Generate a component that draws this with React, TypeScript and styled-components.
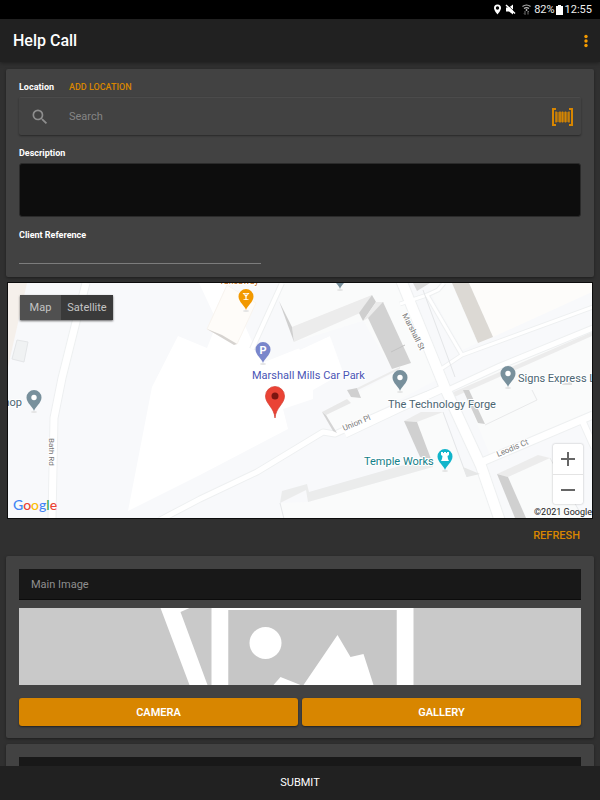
import React from "react";
import styled, { createGlobalStyle } from "styled-components";

const orange = "#d88600";

const GlobalStyle = createGlobalStyle`
  *, *::before, *::after { box-sizing: border-box; }
  body { margin: 0; background: #303030; }
  button, input, textarea { font: inherit; color: inherit; }
`;

const Screen = styled.div`
  display: flex;
  flex-direction: column;
  height: 100vh;
  background: #303030;
  color: #fff;
  font-family: Roboto, "Liberation Sans", sans-serif;
`;

const StatusBar = styled.div`
  flex: none;
  display: flex;
  align-items: center;
  justify-content: flex-end;
  height: 19px;
  padding: 0 8px;
  background: #000;
  color: #eee;
  font-size: 11px;
  line-height: 19px;
  svg { display: block; }
`;

const StatusIcon = styled.svg<{ $gap: number }>`
  width: 11px;
  height: 11px;
  margin-right: ${(p) => p.$gap}px;
`;

const Battery = styled.svg`
  width: 7px;
  height: 10px;
  margin: 0 2px 0 1px;
`;

const AppBar = styled.header`
  flex: none;
  z-index: 1;
  display: flex;
  align-items: center;
  justify-content: space-between;
  height: 43px;
  padding: 0 8px 0 13px;
  background: #212121;
  box-shadow: 0 1px 4px rgba(0, 0, 0, 0.4);
`;

const Title = styled.h1`
  margin: 0;
  font-size: 16px;
  font-weight: 500;
  line-height: 20px;
`;

const IconButton = styled.button`
  display: flex;
  padding: 0;
  border: 0;
  background: none;
  cursor: pointer;
`;

const Content = styled.main`
  flex: 1;
  min-height: 0;
  overflow: hidden;
  padding-top: 7px;
`;

const Card = styled.section`
  margin: 0 6px;
  padding: 8px 13px 13px;
  border-radius: 2px;
  background: #424242;
  box-shadow: 0 1px 3px rgba(0, 0, 0, 0.4);
`;

const ImageCard = styled(Card)`
  margin-bottom: 6px;
  padding: 13px 13px 12px;
`;

const LocationRow = styled.div`
  display: flex;
  align-items: center;
  gap: 15px;
  height: 20px;
`;

const Label = styled.label`
  display: block;
  font-size: 9px;
  font-weight: 700;
  line-height: 12px;
`;

const BlockLabel = styled(Label)`
  margin: 12px 0 4px;
`;

const TextButton = styled.button<{ $size: number }>`
  padding: 0;
  border: 0;
  background: none;
  color: ${orange};
  font-size: ${(p) => p.$size}px;
  font-weight: 500;
  line-height: 16px;
  cursor: pointer;
`;

const SearchBox = styled.div`
  display: flex;
  align-items: center;
  height: 38px;
  padding: 0 8px 0 11px;
  border-top: 1px solid #4b4b4b;
  border-radius: 2px;
  box-shadow: 0 1px 2px rgba(0, 0, 0, 0.4);
`;

const SearchInput = styled.input`
  flex: 1;
  min-width: 0;
  margin-left: 19px;
  padding: 0;
  border: 0;
  outline: 0;
  background: none;
  font-size: 11px;
  &::placeholder { color: #858585; opacity: 1; }
`;

const Description = styled.textarea`
  display: block;
  width: 100%;
  height: 54px;
  padding: 6px;
  border: 1px solid #2a2a2a;
  border-radius: 3px;
  background: #0d0d0d;
  resize: none;
  font-size: 11px;
`;

const ReferenceInput = styled.input`
  display: block;
  width: 43%;
  height: 19px;
  padding: 0;
  border: 0;
  border-bottom: 1px solid #7d7d7d;
  outline: 0;
  background: none;
  font-size: 11px;
`;

const MapFrame = styled.section`
  position: relative;
  height: 237px;
  margin: 5px 7px 0;
  overflow: hidden;
  border: 1px solid #0c0c0c;
  background: #f8f9fb;
`;

const MapDrawing = styled.svg`
  display: block;
  width: 100%;
  height: 100%;
  font-family: Roboto, "Liberation Sans", sans-serif;
`;

const MapTypes = styled.div`
  position: absolute;
  top: 12px;
  left: 12px;
  display: flex;
  box-shadow: 0 1px 2px rgba(0, 0, 0, 0.6);
`;

const MapType = styled.button<{ $active?: boolean }>`
  width: ${(p) => (p.$active ? 41 : 52)}px;
  height: 25px;
  padding: 0;
  border: 0;
  background: ${(p) => (p.$active ? "#505050" : "#3a3a3a")};
  color: #c4c4c4;
  font-size: 11px;
`;

const ZoomControls = styled.div`
  position: absolute;
  right: 9px;
  bottom: 14px;
  display: flex;
  flex-direction: column;
  width: 30px;
  border-radius: 2px;
  background: #fff;
  box-shadow: 0 0 2px rgba(0, 0, 0, 0.3);
`;

const ZoomButton = styled.button`
  display: flex;
  align-items: center;
  justify-content: center;
  height: 30px;
  padding: 0;
  border: 0;
  background: none;
  & + & { border-top: 1px solid #e4e4e4; }
`;

const GoogleLogo = styled.a`
  position: absolute;
  left: 5px;
  bottom: 3px;
  color: #4285f4;
  font-family: Lato, sans-serif;
  font-size: 14px;
  font-weight: 500;
  line-height: 20px;
  text-decoration: none;
`;

const Letter = styled.span<{ $color: string }>`
  color: ${(p) => p.$color};
`;

const Copyright = styled.small`
  position: absolute;
  right: 0;
  bottom: 0;
  color: #222;
  font-size: 9px;
  line-height: 12px;
`;

const RefreshRow = styled.div`
  display: flex;
  align-items: flex-start;
  justify-content: flex-end;
  height: 37px;
  padding: 9px 20px 0;
`;

const NameInput = styled.input`
  display: block;
  width: 100%;
  height: 31px;
  padding: 0 12px;
  border: 0;
  border-bottom: 1px solid #0c0c0c;
  border-radius: 0;
  background: #181818;
  font-size: 11px;
  &::placeholder { color: #8f8f8f; opacity: 1; }
`;

const Preview = styled.svg`
  display: block;
  width: 100%;
  height: 77px;
  margin: 8px 0 13px;
`;

const ButtonRow = styled.div`
  display: grid;
  grid-template-columns: 1fr 1fr;
  gap: 4px;
`;

const FilledButton = styled.button`
  height: 28px;
  border: 0;
  border-radius: 3px;
  background: ${orange};
  color: #fff;
  font-size: 11px;
  font-weight: 600;
  box-shadow: 0 1px 2px rgba(0, 0, 0, 0.5);
  cursor: pointer;
`;

const SubmitButton = styled.button`
  flex: none;
  z-index: 1;
  height: 34px;
  padding: 0 0 2px;
  border: 0;
  background: #212121;
  color: #fff;
  font-size: 11px;
  cursor: pointer;
`;

const MapPin = ({ x, y, color, children }: { x: number; y: number; color: string; children?: React.ReactNode }) => (
  <g transform={`translate(${x} ${y})`}>
    <ellipse cx="0" cy="1" rx="3" ry="1" fill="#e4e4e4" />
    <path d="M0 0C-1 -4 -7.500 -8 -7.500 -13.500A7.500 7.500 0 0 1 7.500 -13.500C7.500 -8 1 -4 0 0Z" fill={color} />
    {children ?? <circle cx="0" cy="-13.500" r="2.700" fill="#fff" />}
  </g>
);

const roads = [
  { d: "M86 283L76 322L62 378L54 418L52 519", w: 7 },
  { d: "M160 520L200 499L257 472L323 432L335 434L400 405L448 386", w: 5 },
  { d: "M282 283L252 349", w: 4 },
  { d: "M400 304L427 295L438 290L444 283", w: 3 },
  { d: "M427 295L462 355", w: 3 },
  { d: "M438 371L462 355L593 307", w: 3 },
  { d: "M446 391L500 366L593 328", w: 5 },
  { d: "M482 462L593 415", w: 7 },
  { d: "M582 420L594 447", w: 6 },
  { d: "M401 280L445 388L481 466L500 521", w: 10 },
  { d: "M345 434L400 408L446 387", w: 7 },
];

const MapPicture = () => (
  <MapDrawing viewBox="8 283 584 235" preserveAspectRatio="xMidYMid slice" role="img" aria-label="Map around Marshall Mills Car Park">
    <path d="M8 283H592V518H8Z" fill="#f8f9fb" />
    <path d="M8 283H27L8 367Z" fill="#f5f0eb" />
    <path d="M17 340L28 342L24 362L12 359Z" fill="#f0f2f3" stroke="#e4e6e8" strokeWidth="1" />
    <path d="M199 283H228L240 315L262 363L330 336L348 370L313 390L313 399L283 409L288 429L200 475L128 511L152 387L178 336L207 348L213 333L214 315Z" fill="#fff" />

    <path d="M283 283H402L440 378L337 433L322 412L392 374L363 321L295 342L279 301Z" fill="#fafbfb" />
    <path d="M295 342L363 321L392 369L348 386L330 336L300 350Z" fill="#f8f9fb" />
    <path d="M428 283H452L478 343L462 350L434 300Z" fill="#fafbfb" />
    <path d="M460 382L592 330V412L490 455Z" fill="#fafbfb" />
    <path d="M404 421L443 412L463 467L480 474L495 518H280V503L308 502L433 467Z" fill="#fafbfb" />
    <path d="M508 477L550 458L582 518H526Z" fill="#fafbfb" />
    <path d="M469 283H592V292L493 337Z" fill="#fdfcfa" />
    <path d="M449 394L592 332V336L452 398Z" fill="#ececec" />

    {roads.map((r) => (
      <path key={r.d} d={r.d} fill="none" stroke="#eef0f1" strokeWidth={r.w + 2} strokeLinejoin="round" />
    ))}
    {roads.map((r) => (
      <path key={r.d} d={r.d} fill="none" stroke="#fff" strokeWidth={r.w} strokeLinejoin="round" />
    ))}

    <path d="M227 285L256 303L237 344L207 329Z" fill="#fefcf9" stroke="#f8f4ef" />
    <path d="M207 329L222 335L237 344L234 345Z" fill="#d6d3d0" />
    <path d="M292 327L372 295L360 313L294 342Z" fill="#ececec" />
    <path d="M279 301L292 327L294 342Z" fill="#cfcfcf" />
    <path d="M372 295L376 302L363 321L359 313Z" fill="#cfcfcf" />
    <path d="M376 302L384 302L368 318L363 321Z" fill="#ececec" />
    <path d="M383 302L411 363L392 369L368 318Z" fill="#d2d2d2" />
    <path d="M391 352L405 345" stroke="#c2c2c2" />
    <path d="M322 412L347 399L351 403L326 415Z" fill="#e8e8e8" />
    <path d="M357 388L400 367V369L358 390Z" fill="#ececec" />
    <path d="M322 412L326 415L337 433L333 431Z" fill="#d4d4d4" />
    <path d="M347 390L357 388L361 398L351 397Z" fill="#d0d0d0" />
    <path d="M413 283H430L417 291Z" fill="#dadada" />
    <path d="M452 283H469L493 337L478 343Z" fill="#dcd9d4" />
    <path d="M463 390H469L485 424L478 423Z" fill="#d0d0d0" />
    <path d="M485 425L537 400L532 390" fill="none" stroke="#e8e9ea" />
    <path d="M443 412L467 477M423 290L455 377" fill="none" stroke="#e4e6e8" />
    <path d="M404 421L421 412L443 412L417 422Z" fill="#ececec" />
    <path d="M404 421L417 422L431 459L420 457Z" fill="#d0d0d0" />
    <path d="M463 467L480 474L467 477Z" fill="#e6e7e7" />
    <path d="M282 491L307 484L309 492L400 466L433 460V467L308 502L306 490L280 503Z" fill="#ebecec" />
    <path d="M280 503L284 519" stroke="#e4e6e8" />
    <path d="M497 474L538 455L550 458L508 477Z" fill="#ececec" />
    <path d="M497 474L508 477L526 518H515Z" fill="#d0d0d0" />
    <path d="M550 458L583 518" stroke="#e8e9ea" />
    <path d="M562 384L572 381V385H562Z" fill="#dedede" />

    <MapPin x={34} y={411} color="#78909c" />
    <MapPin x={400} y={391} color="#78909c" />
    <MapPin x={508} y={387} color="#78909c" />
    <MapPin x={340} y={289} color="#78909c" />
    <MapPin x={246} y={310} color="#f29900">
      <path d="M-3.500 -17H3.500L0.600 -13.500V-10.800H2.500V-10H-2.500V-10.800H-0.600V-13.500Z" fill="#fff" />
      <path d="M-1.500 -15.800H1.500" stroke="#f29900" strokeWidth="0.800" />
    </MapPin>
    <MapPin x={263} y={363} color="#7986cb">
      <text x="0" y="-9.500" textAnchor="middle" fontSize="11" fontWeight="700" fill="#fff">P</text>
    </MapPin>
    <MapPin x={445} y={470} color="#12b5cb">
      <path d="M-4 -18H-2V-17H-1V-18H1V-17H2V-18H4V-15L2.500 -14L3 -11L4 -9H-4L-3 -11L-2.500 -14L-4 -15Z" fill="#fff" />
    </MapPin>
    <path d="M275 418C274 407 265.500 404 265.500 396A9.500 9.500 0 0 1 284.500 396C284.500 404 276 407 275 418Z" fill="#ea4335" stroke="#d33b2e" strokeWidth="0.700" />
    <circle cx="275" cy="396" r="3.500" fill="#7c1510" />

    <g fontSize="11" stroke="#fff" strokeWidth="2" strokeLinejoin="round" paintOrder="stroke">
      <text x="22" y="406" textAnchor="end" fill="#4b6572">hop</text>
      <text x="252" y="379" fill="#4a55b5">Marshall Mills Car Park</text>
      <text x="388" y="408" fill="#4b6572">The Technology Forge</text>
      <text x="518" y="382" fill="#4b6572">Signs Express L</text>
      <text x="364" y="465" fill="#138089">Temple Works</text>
      <text x="219" y="284" fill="#c06a10" fontSize="9">Takeaway</text>
    </g>
    <g fontSize="8" fill="#777" stroke="#fff" strokeWidth="2" paintOrder="stroke">
      <text transform="translate(49 438) rotate(90)">Bath Rd</text>
      <text transform="translate(402 315) rotate(63)">Marshall St</text>
      <text transform="translate(344 431) rotate(-23)">Union Pl</text>
      <text transform="translate(498 457) rotate(-23)">Leodis Ct</text>
    </g>
  </MapDrawing>
);

const App = () => (
  <Screen>
    <GlobalStyle />
    <StatusBar>
      <StatusIcon $gap={2} viewBox="0 0 11 11" aria-hidden="true">
        <path d="M5.500 0.500A3.500 3.500 0 0 0 2 4C2 6.500 5.500 10.500 5.500 10.500S9 6.500 9 4A3.500 3.500 0 0 0 5.500 0.500ZM5.500 2.300A1.700 1.700 0 1 1 5.500 5.700A1.700 1.700 0 0 1 5.500 2.300Z" fill="#fff" fillRule="evenodd" />
      </StatusIcon>
      <StatusIcon $gap={5} viewBox="0 0 11 11" aria-hidden="true">
        <path d="M1 3.500H4L8 0.500V10.500L4 7.500H1Z" fill="#fff" />
        <path d="M1.800 0.500L11 9" stroke="#000" strokeWidth="1" />
        <path d="M1 1L10 9.500" stroke="#fff" strokeWidth="1.500" />
      </StatusIcon>
      <StatusIcon $gap={2} viewBox="0 0 11 11" fill="none" stroke="#bbb" aria-hidden="true">
        <path d="M1.500 2.500Q5.500 -0.500 9.500 2.500M3 4.500Q5.500 2.700 8 4.500" strokeWidth="1.200" />
        <path d="M4.300 6L5.500 5L6.700 6L5.500 7Z" fill="#ddd" stroke="none" />
        <path d="M4 7V10.500M3 9.500L4 10.500M7 10.500V7M8 8L7 7" strokeWidth="1" stroke="#777" />
      </StatusIcon>
      <span>82%</span>
      <Battery viewBox="0 0 7 10" aria-hidden="true">
        <path d="M2 0H5V1H7V10H0V1H2Z" fill="#fff" />
      </Battery>
      <span>12:55</span>
    </StatusBar>
    <AppBar>
      <Title>Help Call</Title>
      <IconButton aria-label="More options">
        <svg width="12" height="14" viewBox="0 0 12 14" fill="#f59b00">
          <circle cx="6" cy="2.500" r="1.700" />
          <circle cx="6" cy="7" r="1.700" />
          <circle cx="6" cy="11.500" r="1.700" />
        </svg>
      </IconButton>
    </AppBar>
    <Content>
      <Card>
        <LocationRow>
          <Label htmlFor="location">Location</Label>
          <TextButton $size={9}>ADD LOCATION</TextButton>
        </LocationRow>
        <SearchBox>
          <svg width="20" height="20" viewBox="0 0 24 24" fill="#8e8e8e" aria-hidden="true">
            <path d="M15.500 14h-.790l-.280-.270A6.471 6.471 0 0 0 16 9.500 6.500 6.500 0 1 0 9.500 16c1.610 0 3.090-.590 4.230-1.570l.270.280v.790l5 4.990L20.490 19l-4.990-5zm-6 0C7.010 14 5 11.990 5 9.500S7.010 5 9.500 5 14 7.010 14 9.500 11.990 14 9.500 14z" />
          </svg>
          <SearchInput id="location" placeholder="Search" />
          <IconButton aria-label="Scan barcode">
            <svg width="21" height="18" viewBox="0 0 21 18" fill="none" stroke={orange}>
              <path d="M4 1H1V17H4M17 1H20V17H17" strokeWidth="2" />
              <path d="M4 3.500V14.500M8 3.500V14.500M10.500 3.500V14.500M13.500 3.500V14.500M17 3.500V14.500" strokeWidth="1.500" />
              <path d="M4 9H17" strokeWidth="10" opacity="0.550" />
            </svg>
          </IconButton>
        </SearchBox>
        <BlockLabel htmlFor="description">Description</BlockLabel>
        <Description id="description" />
        <BlockLabel htmlFor="reference">Client Reference</BlockLabel>
        <ReferenceInput id="reference" />
      </Card>
      <MapFrame>
        <MapPicture />
        <MapTypes>
          <MapType $active>Map</MapType>
          <MapType>Satellite</MapType>
        </MapTypes>
        <ZoomControls>
          <ZoomButton aria-label="Zoom in">
            <svg width="14" height="14" viewBox="0 0 14 14" stroke="#666" strokeWidth="2">
              <path d="M0 7H14M7 0V14" />
            </svg>
          </ZoomButton>
          <ZoomButton aria-label="Zoom out">
            <svg width="14" height="14" viewBox="0 0 14 14" stroke="#666" strokeWidth="2">
              <path d="M0 7H14" />
            </svg>
          </ZoomButton>
        </ZoomControls>
        <GoogleLogo href="#map" aria-label="Google">
          G<Letter $color="#ea4335">o</Letter>
          <Letter $color="#fbbc05">o</Letter>g<Letter $color="#34a853">l</Letter>
          <Letter $color="#ea4335">e</Letter>
        </GoogleLogo>
        <Copyright>©2021 Google</Copyright>
      </MapFrame>
      <RefreshRow>
        <TextButton $size={11}>REFRESH</TextButton>
      </RefreshRow>
      <ImageCard>
        <NameInput aria-label="Main Image" placeholder="Main Image" />
        <Preview viewBox="18 608 563 77" preserveAspectRatio="xMidYMid slice" role="img" aria-label="Image placeholder">
          <path d="M18 608H581V685H18Z" fill="#c9c9c9" />
          <path d="M160 608H189L180 612L207 685H189Z" fill="#fff" />
          <path d="M211 608H413V685H396V610H228V685H211Z" fill="#fff" />
          <path d="M228 610H396V685H228Z" fill="#c6c6c6" />
          <circle cx="265" cy="643" r="16" fill="#fff" />
          <path d="M273 685L280 677L300 685L303 685L337 635L350 657L363 654L373 685Z" fill="#fff" />
        </Preview>
        <ButtonRow>
          <FilledButton>CAMERA</FilledButton>
          <FilledButton>GALLERY</FilledButton>
        </ButtonRow>
      </ImageCard>
      <ImageCard>
        <NameInput aria-label="Second image" />
      </ImageCard>
    </Content>
    <SubmitButton>SUBMIT</SubmitButton>
  </Screen>
);

export default App;
